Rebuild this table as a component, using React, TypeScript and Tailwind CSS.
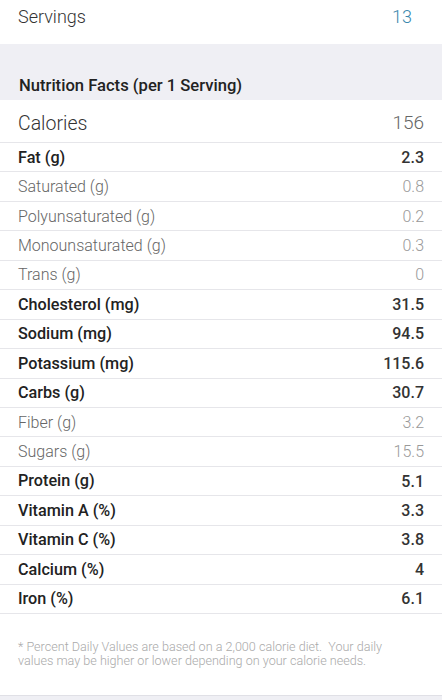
import React from 'react';

type Row = { label: string; value: string; bold?: boolean };

const rows: Row[] = [
  { label: 'Fat (g)', value: '2.3', bold: true },
  { label: 'Saturated (g)', value: '0.8' },
  { label: 'Polyunsaturated (g)', value: '0.2' },
  { label: 'Monounsaturated (g)', value: '0.3' },
  { label: 'Trans (g)', value: '0' },
  { label: 'Cholesterol (mg)', value: '31.5', bold: true },
  { label: 'Sodium (mg)', value: '94.5', bold: true },
  { label: 'Potassium (mg)', value: '115.6', bold: true },
  { label: 'Carbs (g)', value: '30.7', bold: true },
  { label: 'Fiber (g)', value: '3.2' },
  { label: 'Sugars (g)', value: '15.5' },
  { label: 'Protein (g)', value: '5.1', bold: true },
  { label: 'Vitamin A (%)', value: '3.3', bold: true },
  { label: 'Vitamin C (%)', value: '3.8', bold: true },
  { label: 'Calcium (%)', value: '4', bold: true },
  { label: 'Iron (%)', value: '6.1', bold: true },
];

export default function App() {
  return (
    <div className="w-[442px] h-[700px] overflow-hidden bg-white font-['Helvetica_Neue',Roboto,'Liberation_Sans',sans-serif]">
      <div className="h-[44px] flex items-start justify-between pl-[18px] pr-[30px] pt-[3px]">
        <span className="text-[18px] font-light text-[#333]">Servings</span>
        <span className="text-[18px] font-light text-[#3a87ad]">13</span>
      </div>

      <div className="h-[56px] bg-[#efeff4] flex items-end pl-[19px] pb-[1px]">
        <h2 className="text-[16.6px] font-medium text-[#222]">Nutrition Facts (per 1 Serving)</h2>
      </div>

      <div className="h-[43px] flex items-center justify-between pl-[18px] pr-[18px] pt-[5px] border-b border-[#e6e6ea]">
        <span className="text-[19.5px] font-light text-[#333]">Calories</span>
        <span className="text-[19px] font-light text-[#666]">156</span>
      </div>

      {rows.map((r) => (
        <div
          key={r.label}
          className="h-[29.45px] flex items-center justify-between pl-[18px] pr-[18px] pt-[1px] border-b border-[#e6e6ea]"
        >
          <span className={r.bold ? 'text-[16.2px] font-medium text-[#222]' : 'text-[16px] font-light text-[#666]'}>
            {r.label}
          </span>
          <span className={r.bold ? 'text-[16px] font-medium text-[#333]' : 'text-[16px] font-light text-[#999]'}>
            {r.value}
          </span>
        </div>
      ))}

      <div className="h-[81px] pt-[26px] px-[18px]">
        <p className="text-[12.6px] leading-[14px] font-light text-[#aaa] whitespace-nowrap">
          * Percent Daily Values are based on a 2,000 calorie diet.&nbsp; Your daily
          <br />
          values may be higher or lower depending on your calorie needs.
        </p>
      </div>
      <div className="h-[6px] bg-[#efeff4] border-t border-[#e0e0e6]" />
    </div>
  );
}
